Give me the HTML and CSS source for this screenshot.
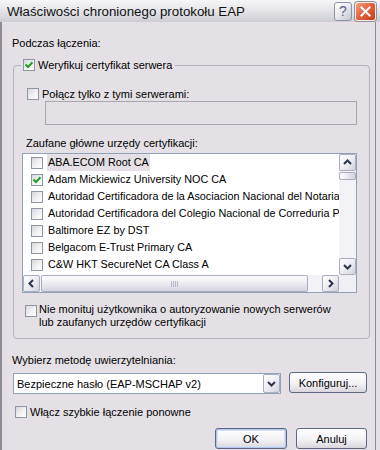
FILE: index.html
```html
<!DOCTYPE html>
<html lang="pl">
<head>
<meta charset="utf-8">
<title>Właściwości chronionego protokołu EAP</title>
<link rel="stylesheet" href="styles.css">
</head>
<body>
<div class="window">
  <div class="titlebar">
    <span class="title">Właściwości chronionego protokołu EAP</span>
    <div class="tb-buttons">
      <span class="tb-help">?</span>
      <span class="tb-close"><svg width="21" height="19" viewBox="0 0 21 19"><path d="M6 5 L15 14 M15 5 L6 14" stroke="#fff" stroke-width="2.2" stroke-linecap="square" fill="none"/></svg></span>
    </div>
  </div>
  <div class="content">
    <div class="label">Podczas łączenia:</div>
    <fieldset class="group">
      <legend class="legend"><span class="legend-inner"><span class="cb checked"><svg width="12" height="12" viewBox="0 0 12 12"><path d="M2.5 5.5 L5 8 L9.5 3.2" stroke="#21a121" stroke-width="2" fill="none"/></svg></span><span class="cb-text">Weryfikuj certyfikat serwera</span></span></legend>
      <div class="row r-polacz"><span class="cb"></span><span class="cb-text">Połącz tylko z tymi serwerami:</span></div>
      <div class="textfield"></div>
      <div class="label l-zaufane">Zaufane główne urzędy certyfikacji:</div>
      <div class="listbox">
        <div class="lb-main">
          <div class="lb-rows">
            <div class="lb-row"><span class="cb"></span><span class="lb-text sel">ABA.ECOM Root CA</span></div>
            <div class="lb-row"><span class="cb checked"><svg width="12" height="12" viewBox="0 0 12 12"><path d="M2.5 5.5 L5 8 L9.5 3.2" stroke="#21a121" stroke-width="2" fill="none"/></svg></span><span class="lb-text">Adam Mickiewicz University NOC CA</span></div>
            <div class="lb-row"><span class="cb"></span><span class="lb-text">Autoridad Certificadora de la Asociacion Nacional del Notariado Mexicano</span></div>
            <div class="lb-row"><span class="cb"></span><span class="lb-text">Autoridad Certificadora del Colegio Nacional de Correduria Publica Mexicana</span></div>
            <div class="lb-row"><span class="cb"></span><span class="lb-text">Baltimore EZ by DST</span></div>
            <div class="lb-row"><span class="cb"></span><span class="lb-text">Belgacom E-Trust Primary CA</span></div>
            <div class="lb-row"><span class="cb"></span><span class="lb-text">C&amp;W HKT SecureNet CA Class A</span></div>
          </div>
          <div class="vscroll">
            <span class="sb-btn"><svg width="15" height="15" viewBox="0 0 15 15"><path d="M4 9 L7.5 5.5 L11 9" stroke="#2c3550" stroke-width="2" fill="none"/></svg></span>
            <span class="vthumb"></span>
            <span class="sb-spacer"></span>
            <span class="sb-btn"><svg width="15" height="15" viewBox="0 0 15 15"><path d="M4 6 L7.5 9.5 L11 6" stroke="#2c3550" stroke-width="2" fill="none"/></svg></span>
          </div>
        </div>
        <div class="lb-bottom">
          <div class="hscroll">
            <span class="sb-btn"><svg width="15" height="15" viewBox="0 0 15 15"><path d="M9 4 L5.5 7.5 L9 11" stroke="#2c3550" stroke-width="2" fill="none"/></svg></span>
            <span class="hthumb"><span class="grip"></span></span>
            <span class="sb-spacer"></span>
            <span class="sb-btn"><svg width="15" height="15" viewBox="0 0 15 15"><path d="M6 4 L9.5 7.5 L6 11" stroke="#2c3550" stroke-width="2" fill="none"/></svg></span>
          </div>
          <div class="corner"></div>
        </div>
      </div>
      <div class="row r-nie"><span class="cb"></span><span class="cb-text multi">Nie monituj użytkownika o autoryzowanie nowych serwerów<br>lub zaufanych urzędów certyfikacji</span></div>
    </fieldset>
    <div class="label l-wybierz">Wybierz metodę uwierzytelniania:</div>
    <div class="combo-row">
      <div class="combo">
        <span class="combo-text">Bezpieczne hasło (EAP-MSCHAP v2)</span>
        <span class="combo-btn"><svg width="15" height="15" viewBox="0 0 15 15"><path d="M4 6 L7.5 9.5 L11 6" stroke="#2c3550" stroke-width="2" fill="none"/></svg></span>
      </div>
      <span class="btn btn-konf">Konfiguruj...</span>
    </div>
    <div class="row r-wlacz"><span class="cb"></span><span class="cb-text">Włącz szybkie łączenie ponowne</span></div>
    <div class="buttons">
      <span class="btn btn-ok">OK</span>
      <span class="btn btn-cancel">Anuluj</span>
    </div>
  </div>
</div>
</body>
</html>
```
FILE: styles.css
```css
html, body {
  margin: 0;
  padding: 0;
  background: #e4e0e5;
}
.window {
  width: 380px;
  height: 450px;
  overflow: hidden;
  background: #e4e0e5;
  font-family: "Liberation Sans", Arial, sans-serif;
  font-size: 11px;
  color: #000;
}
.titlebar {
  height: 22px;
  display: flex;
  align-items: center;
  background: linear-gradient(#f6f6f8, #e2e2e6 55%, #cdccd4);
  padding-right: 4px;
}
.title {
  flex: 1;
  padding-left: 7px;
  padding-top: 1px;
  font-size: 13.3px;
  color: #111;
  white-space: nowrap;
}
.tb-buttons {
  display: flex;
  gap: 3px;
  align-items: center;
}
.tb-help {
  width: 16px;
  height: 17px;
  border: 1px solid #8e93a6;
  border-radius: 3px;
  background: linear-gradient(135deg, #ffffff, #e8e8ee 50%, #c4c4d0);
  color: #56627e;
  font-size: 14px;
  line-height: 17px;
  text-align: center;
}
.tb-close {
  width: 21px;
  height: 19px;
  box-sizing: border-box;
  border: 1px solid #f4f0f0;
  border-radius: 3px;
  background: linear-gradient(135deg, #f4a080, #e0603a 50%, #c83e1c);
  display: flex;
  align-items: center;
  justify-content: center;
  box-shadow: 0 0 0 1px #9a8e96;
}
.tb-close svg {
  display: block;
}
.content {
  width: 376px;
  height: 428px;
  box-sizing: border-box;
  border-left: 2px solid #8f8b95;
  border-right: 1px solid #8f8b95;
  padding: 14px 8px 0 10px;
}
.label {
  line-height: 14px;
  white-space: nowrap;
}
.group {
  margin: 8px 0 0 1px;
  width: 357px;
  box-sizing: border-box;
  padding: 0 0 9px 0;
  border: 1px solid #b6b2ba;
  border-radius: 4px;
}
.legend {
  margin-left: 7px;
  padding: 0 3px 0 2px;
  line-height: 14px;
}
.legend-inner {
  display: flex;
  align-items: center;
  height: 14px;
}
.cb {
  width: 12px;
  height: 12px;
  box-sizing: border-box;
  border: 1px solid #8d96a4;
  background: linear-gradient(135deg, #d8d6dc, #f2f1f4 55%, #ffffff);
  flex: none;
  display: block;
}
.cb svg {
  display: block;
  margin: -1px 0 0 -1px;
}
.cb-text {
  margin-left: 3px;
  white-space: nowrap;
}
.row {
  display: flex;
  align-items: center;
  line-height: 14px;
}
.r-polacz {
  margin-top: 15px;
  padding-left: 13px;
}
.textfield {
  margin-left: 31px;
  width: 312px;
  height: 24px;
  box-sizing: border-box;
  border: 1px solid #a5a9ae;
}
.l-zaufane {
  margin-top: 11px;
  padding-left: 12px;
}
.listbox {
  margin: 3px 0 0 8px;
  width: 335px;
  height: 140px;
  box-sizing: border-box;
  border: 1px solid #8fa2b8;
  background: #fff;
}
.lb-main {
  display: flex;
  height: 121px;
}
.lb-rows {
  flex: 1;
  overflow: hidden;
}
.lb-row {
  height: 17px;
  display: flex;
  align-items: center;
  padding-left: 8px;
  white-space: nowrap;
}
.lb-text {
  margin-left: 4px;
  padding: 0 1px;
  line-height: 17px;
  font-size: 10.8px;
}
.lb-text.sel {
  background: #e4e0e5;
}
.vscroll {
  width: 17px;
  display: flex;
  flex-direction: column;
  background: #f3f2f6;
}
.sb-btn {
  width: 17px;
  height: 17px;
  box-sizing: border-box;
  border: 1px solid #a9adbd;
  border-radius: 2px;
  background: linear-gradient(135deg, #ffffff, #eeedf2 50%, #d4d2de);
  display: flex;
  align-items: center;
  justify-content: center;
  flex: none;
}
.sb-btn svg {
  display: block;
}
.sb-spacer {
  flex: 1;
}
.vthumb {
  margin-top: 1px;
  height: 8px;
  box-sizing: border-box;
  border: 1px solid #a9adbd;
  border-radius: 2px;
  background: linear-gradient(90deg, #ffffff, #e6e5ec 60%, #d4d2de);
}
.lb-bottom {
  display: flex;
  height: 17px;
}
.hscroll {
  flex: 1;
  display: flex;
  background: #f3f2f6;
}
.hthumb {
  margin-left: 1px;
  width: 267px;
  box-sizing: border-box;
  border: 1px solid #a9adbd;
  border-radius: 2px;
  background: linear-gradient(#ffffff, #e8e7ee 60%, #d6d4e0);
  display: flex;
  align-items: center;
  justify-content: center;
}
.grip {
  width: 7px;
  height: 6px;
  background: repeating-linear-gradient(90deg, #b8b8c8 0 1px, transparent 1px 2px);
}
.corner {
  width: 17px;
  background: #f0eff3;
}
.r-nie {
  margin-top: 10px;
  padding-left: 11px;
  align-items: flex-start;
}
.r-nie .cb {
  margin-top: 2px;
}
.r-nie .cb-text {
  margin-left: 2px;
}
.multi {
  line-height: 13px;
}
.l-wybierz {
  margin-top: 14px;
}
.combo-row {
  margin-top: 6px;
  display: flex;
  align-items: center;
}
.combo {
  margin-left: 1px;
  width: 268px;
  height: 21px;
  box-sizing: border-box;
  border: 1px solid #8fa2b8;
  background: #fff;
  display: flex;
  align-items: center;
}
.combo-text {
  flex: 1;
  padding-left: 3px;
  white-space: nowrap;
}
.combo-btn {
  width: 17px;
  height: 19px;
  box-sizing: border-box;
  border: 1px solid #a9adbd;
  border-radius: 2px;
  background: linear-gradient(135deg, #ffffff, #eeedf2 50%, #d4d2de);
  display: flex;
  align-items: center;
  justify-content: center;
}
.btn {
  height: 21px;
  box-sizing: border-box;
  border: 1px solid #5d6882;
  border-radius: 3px;
  background: linear-gradient(#ffffff, #f3f2f5 55%, #d9d6dd);
  display: flex;
  align-items: center;
  justify-content: center;
  white-space: nowrap;
}
.btn-konf {
  margin-left: 8px;
  width: 78px;
  align-self: flex-start;
  margin-top: -1px;
}
.r-wlacz {
  margin-top: 11px;
  padding-left: 3px;
}
.buttons {
  margin-top: 9px;
  display: flex;
  justify-content: flex-end;
  gap: 9px;
}
.btn-ok {
  width: 72px;
  box-shadow: inset 0 0 0 1px #b4c6ea, inset 0 0 0 2px #d6e0f4;
}
.btn-cancel {
  width: 71px;
}
```
